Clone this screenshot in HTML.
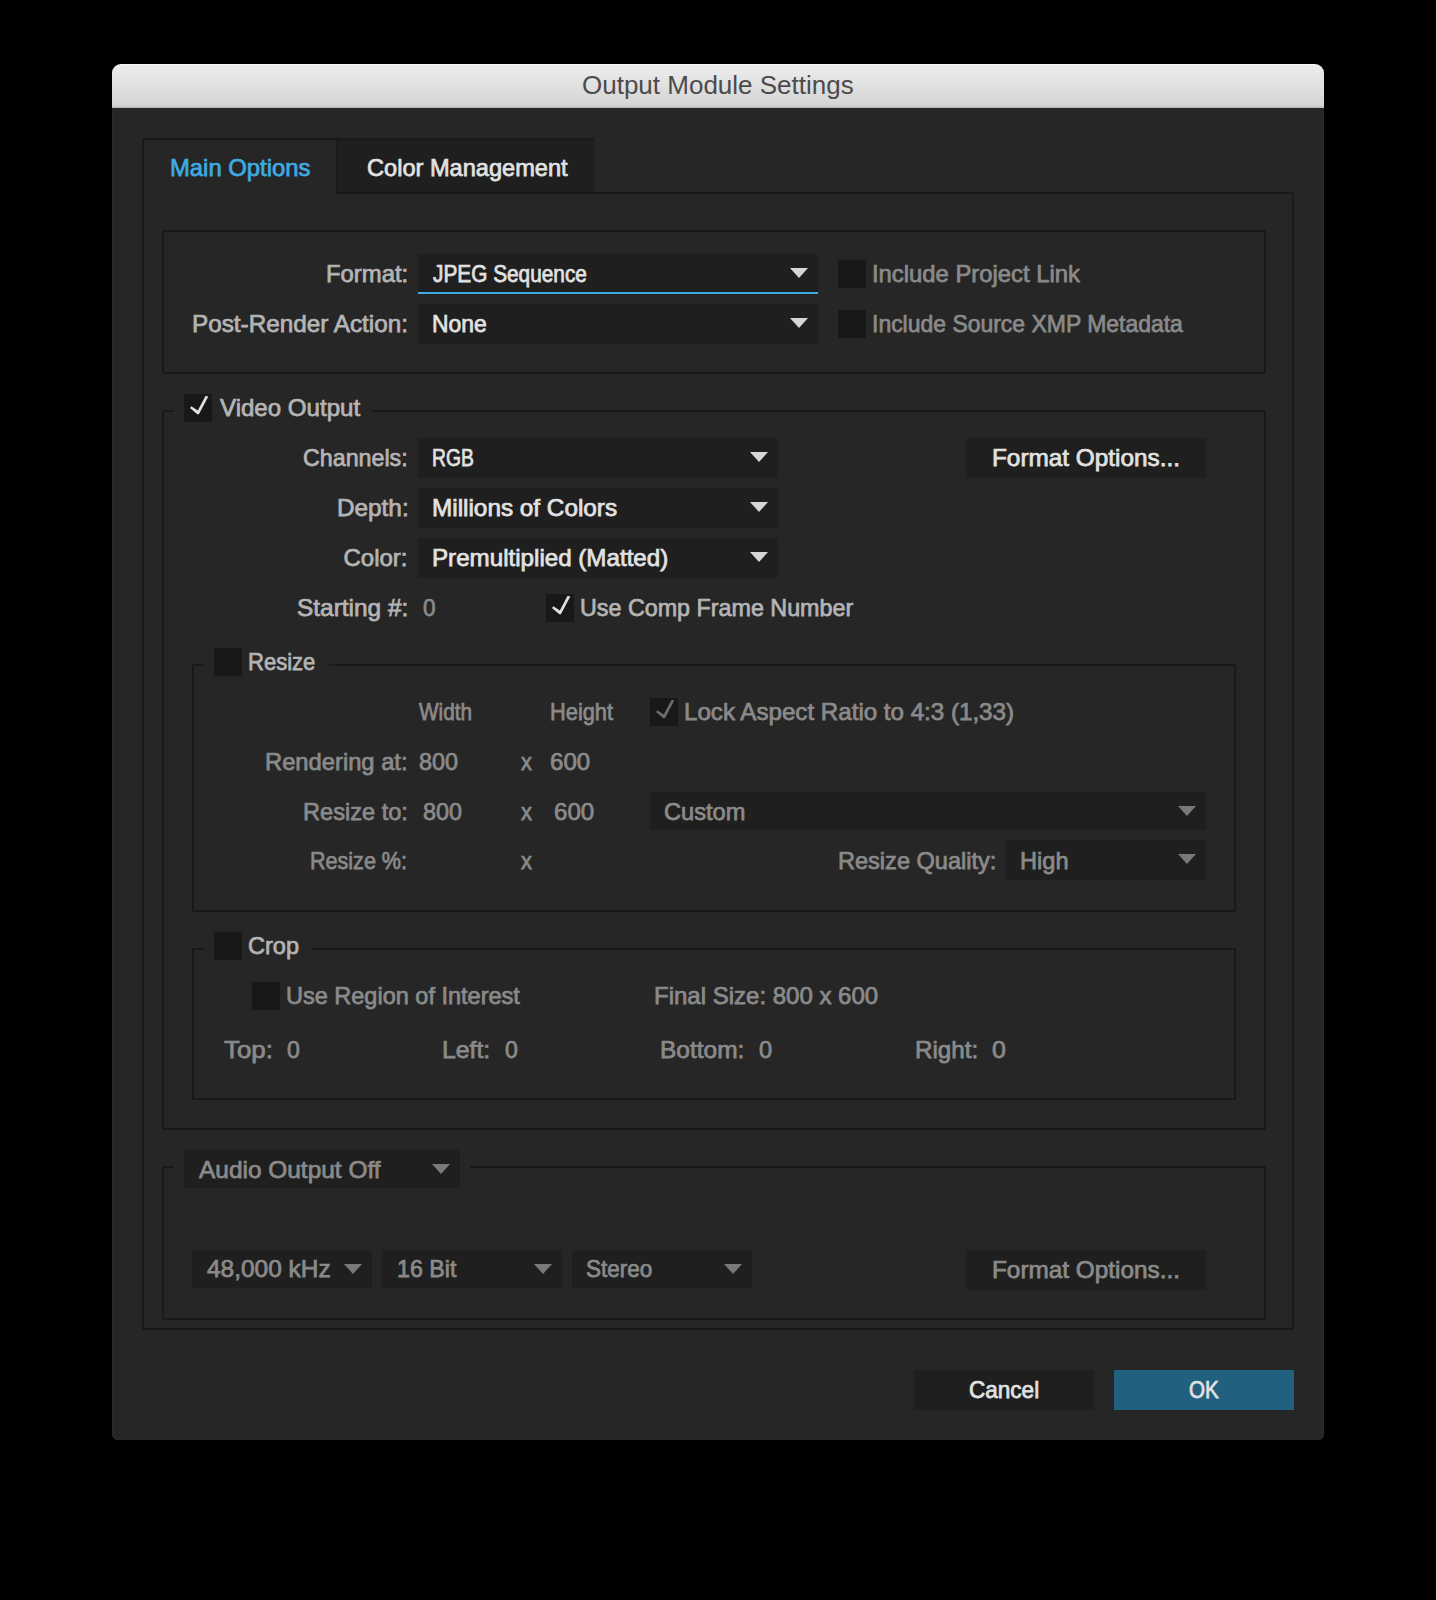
<!DOCTYPE html>
<html><head><meta charset="utf-8"><style>
html,body{margin:0;padding:0;background:#000;width:1436px;height:1600px;overflow:hidden;position:relative}
.a{position:absolute;box-sizing:border-box}
.t{position:absolute;font-family:"Liberation Sans",sans-serif;font-size:24px;line-height:24px;white-space:pre;-webkit-text-stroke:0.75px currentColor;transform-origin:0 0}
svg.a{display:block}
</style></head><body>
<div class="a" style="left:112px;top:64px;width:1212px;height:1376px;background:#262626;border-radius:9px 9px 6px 6px;overflow:hidden;box-shadow:inset 0 0 0 1px #2a2a2a"><div class="a" style="left:0;top:0;width:1212px;height:44px;background:linear-gradient(#ededed,#d3d3d3);border-top:1px solid #f7f7f7"></div><div class="a" style="left:0;top:42px;width:1212px;height:1px;background:#c8c8c8"></div><div class="a" style="left:0;top:43px;width:1212px;height:1px;background:#bababa"></div></div>
<div class="t" style="left:582.00px;top:73px;color:#4b4b4b;font-size:26px;-webkit-text-stroke:0;">Output Module Settings</div>
<div class="a" style="left:338px;top:138px;width:256px;height:56px;background:#1f1f1f;"></div>
<div class="a" style="left:142px;top:138px;width:452px;height:2px;background:#1a1a1a;"></div>
<div class="a" style="left:142px;top:138px;width:2px;height:56px;background:#1a1a1a;"></div>
<div class="a" style="left:336px;top:138px;width:2px;height:56px;background:#1a1a1a;"></div>
<div class="a" style="left:142px;top:192px;width:2px;height:1138px;background:#1a1a1a;"></div>
<div class="a" style="left:1292px;top:192px;width:2px;height:1138px;background:#1a1a1a;"></div>
<div class="a" style="left:142px;top:1328px;width:1152px;height:2px;background:#1a1a1a;"></div>
<div class="a" style="left:338px;top:192px;width:956px;height:2px;background:#1a1a1a;"></div>
<div class="t" style="left:170.01px;top:156px;color:#3eaae2;transform:scaleX(0.9929);">Main Options</div>
<div class="t" style="left:367.00px;top:156px;color:#e2e2e2;transform:scaleX(0.9829);">Color Management</div>
<div class="a" style="left:162px;top:230px;width:1104px;height:144px;border:2px solid #1a1a1a;"></div>
<div class="t" style="left:326.01px;top:262px;color:#b4b4b4;transform:scaleX(0.9938);">Format:</div>
<div class="t" style="left:191.99px;top:312px;color:#b4b4b4;transform:scaleX(1.0118);">Post-Render Action:</div>
<div class="a" style="left:418px;top:254px;width:400px;height:40px;background:#1f1f1f;"></div>
<div class="a" style="left:418px;top:292px;width:400px;height:2px;background:#3eaae2;"></div>
<svg class="a" style="left:790px;top:268px" width="18" height="10"><polygon points="0,0 18,0 9,10" fill="#d6d6d6"/></svg>
<div class="t" style="left:432.50px;top:262px;color:#e2e2e2;transform:scaleX(0.8672);">JPEG Sequence</div>
<div class="a" style="left:418px;top:304px;width:400px;height:40px;background:#1f1f1f;"></div>
<svg class="a" style="left:790px;top:318px" width="18" height="10"><polygon points="0,0 18,0 9,10" fill="#d6d6d6"/></svg>
<div class="t" style="left:432.05px;top:312px;color:#e2e2e2;transform:scaleX(0.9536);">None</div>
<div class="a" style="left:838px;top:260px;width:28px;height:28px;background:#181818;"></div>
<div class="t" style="left:872.01px;top:262px;color:#8a8a8a;transform:scaleX(0.9923);">Include Project Link</div>
<div class="a" style="left:838px;top:310px;width:28px;height:28px;background:#181818;"></div>
<div class="t" style="left:872.04px;top:312px;color:#8a8a8a;transform:scaleX(0.9563);">Include Source XMP Metadata</div>
<div class="a" style="left:162px;top:410px;width:2px;height:720px;background:#1a1a1a;"></div>
<div class="a" style="left:1264px;top:410px;width:2px;height:720px;background:#1a1a1a;"></div>
<div class="a" style="left:162px;top:1128px;width:1104px;height:2px;background:#1a1a1a;"></div>
<div class="a" style="left:162px;top:410px;width:12px;height:2px;background:#1a1a1a;"></div>
<div class="a" style="left:372px;top:410px;width:894px;height:2px;background:#1a1a1a;"></div>
<div class="a" style="left:184px;top:394px;width:28px;height:28px;background:#181818;"></div>
<svg class="a" style="left:184px;top:394px" width="28" height="28"><polygon points="6,14 7.4,12.3 13.8,16.6 21.6,1.8 24.3,2.6 14.9,20.2 13.3,20.2" fill="#e0e0e0"/></svg>
<div class="t" style="left:219.50px;top:396px;color:#b4b4b4;transform:scaleX(1.0035);">Video Output</div>
<div class="t" style="left:303.00px;top:446px;color:#b4b4b4;transform:scaleX(0.9682);">Channels:</div>
<div class="a" style="left:418px;top:438px;width:360px;height:40px;background:#1f1f1f;"></div>
<svg class="a" style="left:750px;top:452px" width="18" height="10"><polygon points="0,0 18,0 9,10" fill="#d6d6d6"/></svg>
<div class="t" style="left:432.20px;top:446px;color:#e2e2e2;transform:scaleX(0.8039);">RGB</div>
<div class="t" style="left:336.69px;top:496px;color:#b4b4b4;transform:scaleX(1.0132);">Depth:</div>
<div class="a" style="left:418px;top:488px;width:360px;height:40px;background:#1f1f1f;"></div>
<svg class="a" style="left:750px;top:502px" width="18" height="10"><polygon points="0,0 18,0 9,10" fill="#d6d6d6"/></svg>
<div class="t" style="left:431.99px;top:496px;color:#e2e2e2;transform:scaleX(1.0132);">Millions of Colors</div>
<div class="t" style="left:343.50px;top:546px;color:#b4b4b4;">Color:</div>
<div class="a" style="left:418px;top:538px;width:360px;height:40px;background:#1f1f1f;"></div>
<svg class="a" style="left:750px;top:552px" width="18" height="10"><polygon points="0,0 18,0 9,10" fill="#d6d6d6"/></svg>
<div class="t" style="left:431.99px;top:546px;color:#e2e2e2;transform:scaleX(1.0064);">Premultiplied (Matted)</div>
<div class="a" style="left:966px;top:438px;width:240px;height:40px;background:#1f1f1f;"></div>
<div class="t" style="left:991.99px;top:446px;color:#e2e2e2;transform:scaleX(1.0137);">Format Options...</div>
<div class="t" style="left:296.70px;top:596px;color:#b4b4b4;transform:scaleX(1.0176);">Starting #:</div>
<div class="t" style="left:423.00px;top:596px;color:#8a8a8a;transform:scaleX(0.9385);">0</div>
<div class="a" style="left:546px;top:594px;width:28px;height:28px;background:#181818;"></div>
<svg class="a" style="left:546px;top:594px" width="28" height="28"><polygon points="6,14 7.4,12.3 13.8,16.6 21.6,1.8 24.3,2.6 14.9,20.2 13.3,20.2" fill="#e0e0e0"/></svg>
<div class="t" style="left:580.03px;top:596px;color:#b4b4b4;transform:scaleX(0.9708);">Use Comp Frame Number</div>
<div class="a" style="left:192px;top:664px;width:2px;height:248px;background:#1a1a1a;"></div>
<div class="a" style="left:1234px;top:664px;width:2px;height:248px;background:#1a1a1a;"></div>
<div class="a" style="left:192px;top:910px;width:1044px;height:2px;background:#1a1a1a;"></div>
<div class="a" style="left:192px;top:664px;width:12px;height:2px;background:#1a1a1a;"></div>
<div class="a" style="left:329px;top:664px;width:907px;height:2px;background:#1a1a1a;"></div>
<div class="a" style="left:214px;top:648px;width:28px;height:28px;background:#181818;"></div>
<div class="t" style="left:248.28px;top:650px;color:#b4b4b4;transform:scaleX(0.9181);">Resize</div>
<div class="t" style="left:419.36px;top:700px;color:#8a8a8a;transform:scaleX(0.8629);">Width</div>
<div class="t" style="left:549.89px;top:700px;color:#8a8a8a;transform:scaleX(0.9087);">Height</div>
<div class="a" style="left:650px;top:698px;width:28px;height:28px;background:#181818;"></div>
<svg class="a" style="left:650px;top:698px" width="28" height="28"><polygon points="6,14 7.4,12.3 13.8,16.6 21.6,1.8 24.3,2.6 14.9,20.2 13.3,20.2" fill="#6b6b6b"/></svg>
<div class="t" style="left:683.99px;top:700px;color:#8a8a8a;transform:scaleX(1.0055);">Lock Aspect Ratio to 4:3 (1,33)</div>
<div class="t" style="left:265.01px;top:750px;color:#8a8a8a;transform:scaleX(0.9894);">Rendering at:</div>
<div class="t" style="left:419.40px;top:750px;color:#8a8a8a;transform:scaleX(0.9750);">800</div>
<div class="t" style="left:520.91px;top:750px;color:#8a8a8a;transform:scaleX(0.9071);">x</div>
<div class="t" style="left:550.30px;top:750px;color:#8a8a8a;transform:scaleX(1.0025);">600</div>
<div class="t" style="left:303.32px;top:800px;color:#8a8a8a;transform:scaleX(0.9827);">Resize to:</div>
<div class="t" style="left:423.30px;top:800px;color:#8a8a8a;transform:scaleX(0.9750);">800</div>
<div class="t" style="left:520.91px;top:800px;color:#8a8a8a;transform:scaleX(0.9071);">x</div>
<div class="t" style="left:554.20px;top:800px;color:#8a8a8a;transform:scaleX(1.0025);">600</div>
<div class="a" style="left:650px;top:792px;width:556px;height:38px;background:#1f1f1f;"></div>
<svg class="a" style="left:1178px;top:806px" width="18" height="10"><polygon points="0,0 18,0 9,10" fill="#7a7a7a"/></svg>
<div class="t" style="left:664.30px;top:800px;color:#8a8a8a;transform:scaleX(0.9841);">Custom</div>
<div class="t" style="left:310.40px;top:849px;color:#8a8a8a;transform:scaleX(0.8981);">Resize %:</div>
<div class="t" style="left:520.91px;top:849px;color:#8a8a8a;transform:scaleX(0.9071);">x</div>
<div class="t" style="left:838.02px;top:849px;color:#8a8a8a;transform:scaleX(0.9811);">Resize Quality:</div>
<div class="a" style="left:1006px;top:840px;width:200px;height:40px;background:#1f1f1f;"></div>
<svg class="a" style="left:1178px;top:854px" width="18" height="10"><polygon points="0,0 18,0 9,10" fill="#7a7a7a"/></svg>
<div class="t" style="left:1020.22px;top:849px;color:#8a8a8a;transform:scaleX(0.9833);">High</div>
<div class="a" style="left:192px;top:948px;width:2px;height:152px;background:#1a1a1a;"></div>
<div class="a" style="left:1234px;top:948px;width:2px;height:152px;background:#1a1a1a;"></div>
<div class="a" style="left:192px;top:1098px;width:1044px;height:2px;background:#1a1a1a;"></div>
<div class="a" style="left:192px;top:948px;width:12px;height:2px;background:#1a1a1a;"></div>
<div class="a" style="left:312px;top:948px;width:924px;height:2px;background:#1a1a1a;"></div>
<div class="a" style="left:214px;top:932px;width:28px;height:28px;background:#181818;"></div>
<div class="t" style="left:248.20px;top:934px;color:#b4b4b4;transform:scaleX(0.9808);">Crop</div>
<div class="a" style="left:252px;top:982px;width:28px;height:28px;background:#181818;"></div>
<div class="t" style="left:286.22px;top:984px;color:#8a8a8a;transform:scaleX(0.9791);">Use Region of Interest</div>
<div class="t" style="left:654.00px;top:984px;color:#8a8a8a;">Final Size: 800 x 600</div>
<div class="t" style="left:224.00px;top:1038px;color:#8a8a8a;transform:scaleX(1.0773);">Top:</div>
<div class="t" style="left:286.70px;top:1038px;color:#8a8a8a;transform:scaleX(0.9615);">0</div>
<div class="t" style="left:442.17px;top:1038px;color:#8a8a8a;transform:scaleX(1.0318);">Left:</div>
<div class="t" style="left:504.50px;top:1038px;color:#8a8a8a;transform:scaleX(0.9615);">0</div>
<div class="t" style="left:660.18px;top:1038px;color:#8a8a8a;transform:scaleX(1.0200);">Bottom:</div>
<div class="t" style="left:758.70px;top:1038px;color:#8a8a8a;transform:scaleX(0.9846);">0</div>
<div class="t" style="left:915.39px;top:1038px;color:#8a8a8a;transform:scaleX(1.0067);">Right:</div>
<div class="t" style="left:992.00px;top:1038px;color:#8a8a8a;transform:scaleX(1.0385);">0</div>
<div class="a" style="left:162px;top:1166px;width:2px;height:154px;background:#1a1a1a;"></div>
<div class="a" style="left:1264px;top:1166px;width:2px;height:154px;background:#1a1a1a;"></div>
<div class="a" style="left:162px;top:1318px;width:1104px;height:2px;background:#1a1a1a;"></div>
<div class="a" style="left:162px;top:1166px;width:12px;height:2px;background:#1a1a1a;"></div>
<div class="a" style="left:470px;top:1166px;width:796px;height:2px;background:#1a1a1a;"></div>
<div class="a" style="left:184px;top:1150px;width:276px;height:38px;background:#1f1f1f;"></div>
<svg class="a" style="left:432px;top:1164px" width="18" height="10"><polygon points="0,0 18,0 9,10" fill="#7a7a7a"/></svg>
<div class="t" style="left:199.42px;top:1158px;color:#8a8a8a;transform:scaleX(1.0178);">Audio Output Off</div>
<div class="a" style="left:192px;top:1250px;width:180px;height:38px;background:#1f1f1f;"></div>
<svg class="a" style="left:344px;top:1264px" width="18" height="10"><polygon points="0,0 18,0 9,10" fill="#7a7a7a"/></svg>
<div class="t" style="left:206.70px;top:1257px;color:#8a8a8a;transform:scaleX(1.0190);">48,000 kHz</div>
<div class="a" style="left:382px;top:1250px;width:180px;height:38px;background:#1f1f1f;"></div>
<svg class="a" style="left:534px;top:1264px" width="18" height="10"><polygon points="0,0 18,0 9,10" fill="#7a7a7a"/></svg>
<div class="t" style="left:397.33px;top:1257px;color:#8a8a8a;transform:scaleX(0.9689);">16 Bit</div>
<div class="a" style="left:572px;top:1250px;width:180px;height:38px;background:#1f1f1f;"></div>
<svg class="a" style="left:724px;top:1264px" width="18" height="10"><polygon points="0,0 18,0 9,10" fill="#7a7a7a"/></svg>
<div class="t" style="left:586.00px;top:1257px;color:#8a8a8a;transform:scaleX(0.9366);">Stereo</div>
<div class="a" style="left:966px;top:1250px;width:240px;height:40px;background:#1f1f1f;"></div>
<div class="t" style="left:991.99px;top:1258px;color:#8a8a8a;transform:scaleX(1.0137);">Format Options...</div>
<div class="a" style="left:914px;top:1370px;width:180px;height:40px;background:#1f1f1f;"></div>
<div class="t" style="left:969.00px;top:1378px;color:#e2e2e2;transform:scaleX(0.9392);">Cancel</div>
<div class="a" style="left:1114px;top:1370px;width:180px;height:40px;background:#22607f;"></div>
<div class="t" style="left:1188.60px;top:1378px;color:#e2e2e2;transform:scaleX(0.8571);">OK</div>
</body></html>
